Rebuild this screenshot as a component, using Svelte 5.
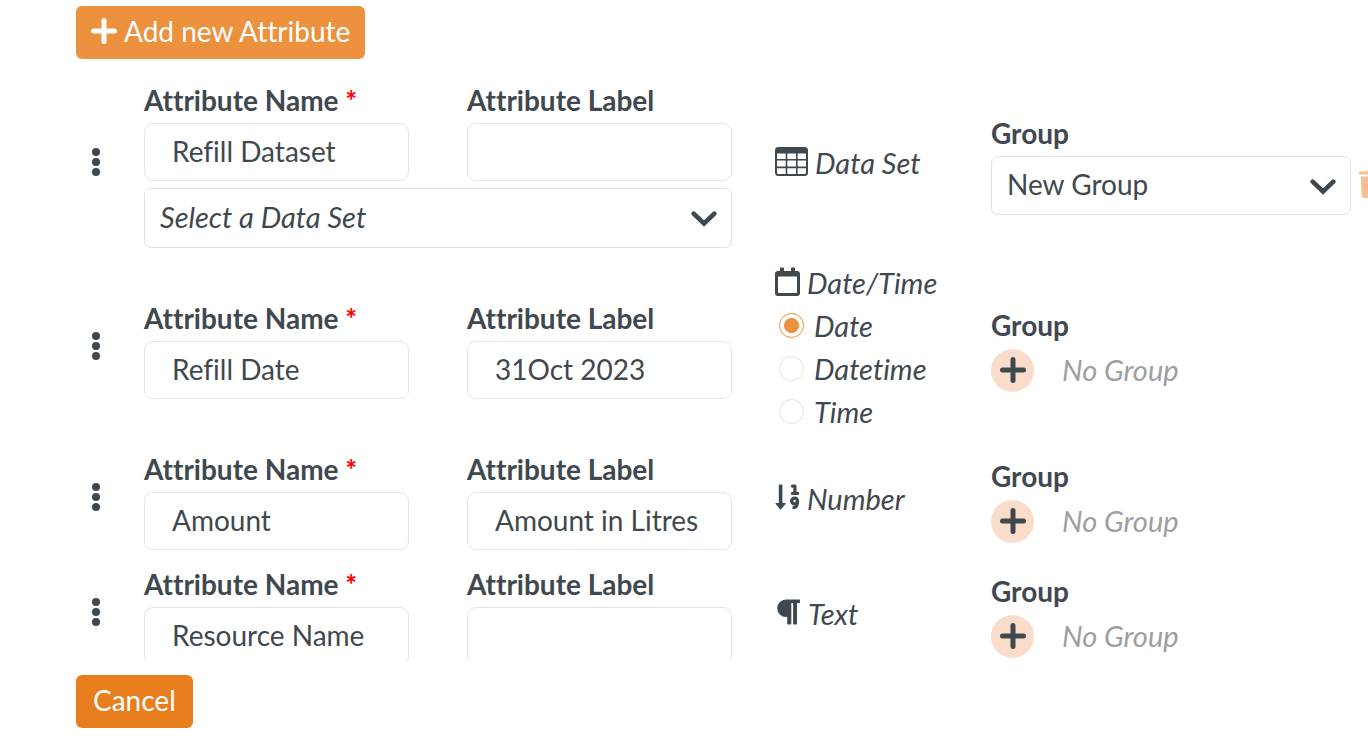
<script>
  let attributes = $state([
    { id: 1, name: 'Refill Dataset', label: '', type: 'dataset', title: 'Data Set', grouped: true },
    { id: 2, name: 'Refill Date', label: '31Oct 2023', type: 'date', title: 'Date/Time', grouped: false },
    { id: 3, name: 'Amount', label: 'Amount in Litres', type: 'number', title: 'Number', grouped: false },
    { id: 4, name: 'Resource Name', label: '', type: 'text', title: 'Text', grouped: false }
  ]);
  let precision = $state('Date');
  const precisions = ['Date', 'Datetime', 'Time'];
</script>

{#snippet plus()}
  <svg class="plus" viewBox="0 0 26 26" aria-hidden="true">
    <path d="M13 2.5v21M2.5 13h21" fill="none" stroke="currentColor" stroke-width="5" stroke-linecap="round" />
  </svg>
{/snippet}

{#snippet chevron()}
  <svg class="chevron" viewBox="0 0 26 16" aria-hidden="true">
    <path d="M2.7 2.7 13 12.5 23.3 2.7" fill="none" stroke="currentColor" stroke-width="4.6" stroke-linecap="round" stroke-linejoin="miter" />
  </svg>
{/snippet}

{#snippet typeIcon(type)}
  {#if type === 'dataset'}
    <svg width="33" height="30" viewBox="0 0 33 30" aria-hidden="true">
      <rect x="1" y="1" width="31" height="27" rx="2.5" fill="none" stroke="currentColor" stroke-width="2" />
      <path d="M1 1.5h31v5H1z" fill="currentColor" />
      <path d="M11.500 6v22M21.800 6v22M1 12.800h31M1 20.400h31" fill="none" stroke="currentColor" stroke-width="1.6" />
    </svg>
  {:else if type === 'date'}
    <svg width="25" height="30" viewBox="0 0 25 30" aria-hidden="true">
      <path fill="currentColor" fill-rule="evenodd" d="M5 1.2Q5 .5 5.8.5h2.4Q9 .5 9 1.2V4h7V1.2q0-.7.8-.7h2.4q.8 0 .8.7V4h2q3 0 3 3v19q0 3-3 3H3q-3 0-3-3V7q0-3 3-3h2zM3 9.500v15.700q0 .8.8.8h17.400q.8 0 .8-.8V9.500z" />
    </svg>
  {:else if type === 'number'}
    <svg width="25" height="28" viewBox="0 0 25 28" aria-hidden="true">
      <path fill="currentColor" d="M3.800 2.300Q3.800 1.500 4.600 1.500h2q.8 0 .8.800V20h2.700q1.400 0 .5 1.100l-4.300 4.800q-.7.7-1.400 0L.6 21.100Q-.3 20 1.100 20h2.700z" />
      <path fill="none" stroke="currentColor" stroke-width="3.200" stroke-linejoin="round" stroke-linecap="round" d="M17.500 3.100h2.400v7M17.400 10.400h5.200" />
      <circle cx="19.600" cy="18" r="2.900" fill="none" stroke="currentColor" stroke-width="3.300" />
      <path fill="none" stroke="currentColor" stroke-width="3.200" stroke-linecap="round" d="M22.500 18.300q.2 5.300-3.600 6.300" />
    </svg>
  {:else}
    <svg width="26" height="28" viewBox="0 0 26 28" aria-hidden="true">
      <path fill="currentColor" d="M11 1.500h13.200q.8 0 .8.800v2q0 .8-.8.800H22v20.600q0 .8-.8.800h-2.300q-.8 0-.8-.8V5.100h-1.800v20.600q0 .8-.8.800H13q-.8 0-.8-.8V19H11a8.750 8.750 0 0 1 0-17.500z" />
    </svg>
  {/if}
{/snippet}

<main>
  <button class="btn add">{@render plus()}Add new Attribute</button>

  <div class="list">
    {#each attributes as attr (attr.id)}
      <div class="row">
        <button class="handle" aria-label="Reorder attribute">
          <svg width="8" height="28" viewBox="0 0 8 28" fill="currentColor" aria-hidden="true">
            <circle cx="4" cy="4" r="4" /><circle cx="4" cy="14" r="4" /><circle cx="4" cy="24" r="4" />
          </svg>
        </button>

        <div class="fields">
          <div class="field">
            <label for="name-{attr.id}">Attribute Name <span class="req">*</span></label>
            <input id="name-{attr.id}" type="text" bind:value={attr.name} />
          </div>
          <div class="field">
            <label for="label-{attr.id}">Attribute Label</label>
            <input id="label-{attr.id}" type="text" bind:value={attr.label} />
          </div>
          {#if attr.type === 'dataset'}
            <div class="select wide">
              <select aria-label="Data set"><option>Select a Data Set</option></select>
              {@render chevron()}
            </div>
          {/if}
        </div>

        <div class="type">
          <div class="kind">{@render typeIcon(attr.type)}<span>{attr.title}</span></div>
          {#if attr.type === 'date'}
            {#each precisions as option}
              <label class="choice">
                <input type="radio" name="precision" value={option} bind:group={precision} />{option}
              </label>
            {/each}
          {/if}
        </div>

        <div class="group">
          {#if attr.grouped}
            <label for="group-{attr.id}">Group</label>
            <div class="pick">
              <div class="select">
                <select id="group-{attr.id}"><option>New Group</option></select>
                {@render chevron()}
              </div>
              <button class="trash" aria-label="Remove group">
                <svg width="25" height="28" viewBox="0 0 25 28" fill="currentColor" aria-hidden="true">
                  <path d="M1 1.500h6.500L8.300.4Q8.600 0 9.200 0h6.600q.6 0 .9.400l.8 1.100H24q1 0 1 1v1q0 1-1 1H1q-1 0-1-1v-1q0-1 1-1zM1.700 6.500h21.600l-1.100 19q-.2 2.500-2.700 2.500h-14Q3 28 2.800 25.500z" />
                </svg>
              </button>
            </div>
          {:else}
            <span class="caption">Group</span>
            <div class="none">
              <button class="round" aria-label="Add group">{@render plus()}</button>
              <em>No Group</em>
            </div>
          {/if}
        </div>
      </div>
    {/each}
  </div>

  <button class="btn cancel">Cancel</button>
</main>

<style>
  :global(body) { background: #fff; }
  main, main * { box-sizing: border-box; }
  main {
    height: 100vh;
    padding: 6px 0 12px 76px;
    display: flex;
    flex-direction: column;
    align-items: flex-start;
    font-family: Lato, sans-serif;
    font-size: 28px;
    font-variant-ligatures: none;
    color: #3f484f;
  }
  button, input, select { font: inherit; font-variant-ligatures: none; color: inherit; margin: 0; }
  button { border: 0; background: none; padding: 0; cursor: pointer; }
  svg { display: block; flex: none; }
  .btn {
    flex: none;
    height: 53px;
    padding: 0 15px 4px;
    display: flex;
    align-items: center;
    gap: 7px;
    border-radius: 6px;
    color: #fff;
    background: #e87e1e;
  }
  .add { background: #ec913d; }
  .cancel { padding: 0 17px 4px; }
  .plus { width: 26px; height: 26px; }
  .list {
    flex: 1;
    min-height: 0;
    align-self: stretch;
    margin: 20px 0 14px;
    overflow: hidden auto;
    scrollbar-width: none;
    display: flex;
    flex-direction: column;
    gap: 13px;
  }
  .row {
    flex: none;
    display: grid;
    grid-template-columns: 25px minmax(0, 588fr) minmax(0, 173fr) minmax(0, 377fr);
    column-gap: 43px;
    align-items: center;
  }
  .handle { padding: 0 0 4px 16px; }
  .fields {
    display: grid;
    grid-template-columns: 1fr 1fr;
    gap: 7px 58px;
  }
  .field { min-width: 0; }
  .field label, .group label, .caption {
    display: block;
    padding-bottom: 2px;
    font-weight: 700;
    line-height: 42px;
    white-space: nowrap;
  }
  .req { color: #f00; }
  .field input {
    display: block;
    width: 100%;
    height: 58px;
    padding: 0 27px 2px;
    border: 1px solid #e3e4e5;
    border-radius: 9px;
    background: #fff;
  }
  .select { position: relative; flex: 1; }
  .wide { grid-column: 1 / -1; font-size: 29px; font-style: italic; }
  select {
    display: block;
    appearance: none;
    width: 100%;
    height: 59px;
    padding: 0 60px 4px 15px;
    border: 1px solid #e0e1e2;
    border-radius: 7px;
    background: #fff;
  }
  .wide select { height: 60px; }
  .chevron {
    position: absolute;
    right: 15px;
    top: 23px;
    width: 26px;
    height: 16px;
    pointer-events: none;
  }
  .type {
    padding-bottom: 2px;
    font-size: 29px;
    font-style: italic;
    line-height: 43px;
    white-space: nowrap;
  }
  .kind { display: flex; align-items: center; gap: 7px; }
  .kind svg { margin-bottom: 2px; }
  .choice {
    display: flex;
    align-items: center;
    gap: 10px;
    padding-left: 4px;
  }
  .choice input {
    appearance: none;
    flex: none;
    width: 25px;
    height: 25px;
    border: 1px solid #e0e1e2;
    border-radius: 50%;
  }
  .choice input:checked {
    border-color: #ec913d;
    background: radial-gradient(circle, #ec913d 7px, #fff 8px);
  }
  .pick { display: flex; align-items: center; gap: 8px; }
  .trash { color: #f5be93; margin: 0 -16px 4px 0; }
  .none { display: flex; align-items: center; gap: 28px; height: 44px; }
  .none em { padding-bottom: 2px; font-size: 29px; color: #9c9fa2; }
  .round {
    width: 43px;
    height: 43px;
    display: grid;
    place-items: center;
    border-radius: 50%;
    background: #f9dcc9;
  }
</style>
